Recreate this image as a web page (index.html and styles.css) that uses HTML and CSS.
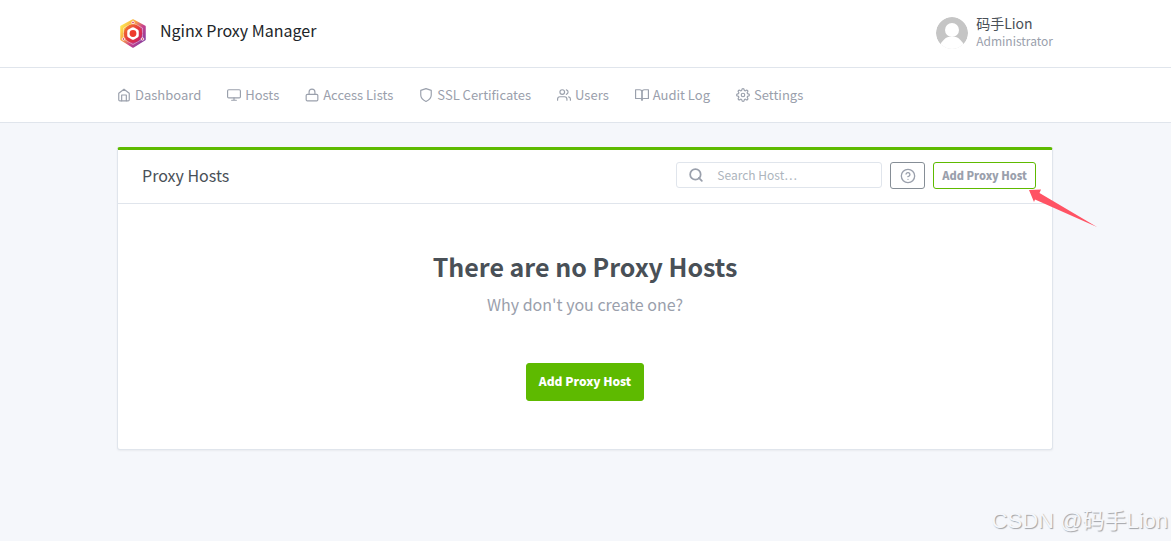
FILE: index.html
```html
<!DOCTYPE html>
<html lang="en">
<head>
  <meta charset="UTF-8" />
  <meta name="viewport" content="width=device-width, initial-scale=1.0"/>
  <title>Nginx Proxy Manager</title>
  <link rel="stylesheet" href="styles.css">
</head>
<body>
  <header class="header">
    <div class="container header-row">
      <a class="brand" href="/">
        <svg class="logo" viewBox="0 0 32 32" aria-hidden="true">
          <defs>
            <linearGradient id="logoFill" x1="0" y1="0.2" x2="0.9" y2="0.9">
              <stop offset="0" stop-color="#fdea4e"/>
              <stop offset="0.35" stop-color="#f8a046"/>
              <stop offset="0.65" stop-color="#c8408c"/>
              <stop offset="1" stop-color="#8440a0"/>
            </linearGradient>
            <linearGradient id="ringFill" x1="0" y1="0" x2="1" y2="1">
              <stop offset="0" stop-color="#f5842c"/>
              <stop offset="0.5" stop-color="#e53a3c"/>
              <stop offset="1" stop-color="#c3186f"/>
            </linearGradient>
          </defs>
          <path d="M16 3 28 9.500v13L16 30 4 22.500v-13z" fill="url(#logoFill)" stroke="url(#logoFill)" stroke-width="1.500" stroke-linejoin="round"/>
          <path d="M16 6 25.500 11v11L16 27.500 6.500 22V11z" fill="none" stroke="#fff" stroke-width="0.800" opacity="0.500"/>
          <circle cx="16" cy="16.500" r="9.200" fill="url(#ringFill)"/>
          <path d="M16 12.500 19.500 14.500v4L16 20.500 12.500 18.500v-4z" fill="#fff" stroke="#fff" stroke-width="4.500" stroke-linejoin="round"/>
          <circle cx="16" cy="16.500" r="3.400" fill="#ee3b2c"/>
          <g fill="#d9486b" stroke="#fff" stroke-width="0.800">
            <circle cx="16" cy="5.500" r="1.300"/>
            <circle cx="6.500" cy="22" r="1.300"/>
            <circle cx="25.500" cy="22" r="1.300"/>
          </g>
        </svg>
        <span>Nginx Proxy Manager</span>
      </a>
      <a class="user" href="#profile">
        <svg class="avatar" viewBox="0 0 32 32" aria-hidden="true">
          <circle cx="16" cy="16" r="16" fill="#c5c5c5"/>
          <circle cx="16" cy="13" r="7" fill="#fff"/>
          <path d="M4 32v-4c2-4 5-7 8-8h8c3 1 6 4 8 8v4z" fill="#fff"/>
        </svg>
        <span class="user-text">
          <span class="user-name">码手Lion</span>
          <small class="user-role">Administrator</small>
        </span>
      </a>
    </div>
  </header>

  <nav class="menu">
    <div class="container menu-row">
      <a class="menu-link" href="#dashboard">
        <svg class="icon" viewBox="0 0 24 24"><path d="M3 9l9-7 9 7v11a2 2 0 0 1-2 2H5a2 2 0 0 1-2-2z"/><path d="M8 22V12h8v10"/></svg>
        Dashboard
      </a>
      <a class="menu-link" href="#hosts">
        <svg class="icon" viewBox="0 0 24 24"><rect x="1" y="3" width="22" height="14" rx="2"/><path d="M8 21h8M12 17v4"/></svg>
        Hosts
      </a>
      <a class="menu-link" href="#access">
        <svg class="icon" viewBox="0 0 24 24"><rect x="2" y="11" width="20" height="11" rx="2"/><path d="M7 11V7a5 5 0 0 1 10 0v4"/></svg>
        Access Lists
      </a>
      <a class="menu-link" href="#certificates">
        <svg class="icon" viewBox="0 0 24 24"><path d="M12 23s9-4 9-11V4l-9-3-9 3v8c0 7 9 11 9 11z"/></svg>
        SSL Certificates
      </a>
      <a class="menu-link" href="#users">
        <svg class="icon" viewBox="0 0 24 24"><path d="M17 21v-2a4 4 0 0 0-4-4H5a4 4 0 0 0-4 4v2"/><circle cx="9" cy="7" r="4"/><path d="M23 21v-2a4 4 0 0 0-3-3.870M16 3.130a4 4 0 0 1 0 7.750"/></svg>
        Users
      </a>
      <a class="menu-link" href="#audit">
        <svg class="icon" viewBox="0 0 24 24"><path d="M1 3h7a4 4 0 0 1 4 4v14a3 3 0 0 0-3-3H1z"/><path d="M23 3h-7a4 4 0 0 0-4 4v14a3 3 0 0 1 3-3h8z"/></svg>
        Audit Log
      </a>
      <a class="menu-link" href="#settings">
        <svg class="icon" viewBox="0 0 24 24"><circle cx="12" cy="12" r="3"/><path d="M19.400 15a1.650 1.650 0 0 0 .33 1.820l.06.06a2 2 0 1 1-2.830 2.830l-.06-.06a1.650 1.650 0 0 0-2.800 1.170V21a2 2 0 0 1-4 0v-.09a1.650 1.650 0 0 0-2.900-1.260l-.06.06a2 2 0 1 1-2.830-2.830l.06-.06A1.650 1.650 0 0 0 3.090 14H3a2 2 0 0 1 0-4h.09a1.650 1.650 0 0 0 1.260-2.820l-.06-.06a2 2 0 1 1 2.830-2.830l.06.06A1.650 1.650 0 0 0 10 3.090V3a2 2 0 0 1 4 0v.09a1.650 1.650 0 0 0 2.820 1.260l.06-.06a2 2 0 1 1 2.830 2.830l-.06.06A1.650 1.650 0 0 0 20.910 10H21a2 2 0 0 1 0 4h-.09a1.650 1.650 0 0 0-1.510 1z"/></svg>
        Settings
      </a>
    </div>
  </nav>

  <main class="container content">
    <section class="card">
      <div class="card-header">
        <h3 class="card-title">Proxy Hosts</h3>
        <div class="card-options">
          <label class="search">
            <svg class="search-icon" viewBox="0 0 24 24" aria-hidden="true"><circle cx="11" cy="11" r="9"/><path d="M22 22l-5-5"/></svg>
            <input class="search-input" type="text" placeholder="Search Host…" aria-label="Search Host">
          </label>
          <button class="btn btn-help" type="button" aria-label="Help">
            <svg class="help-icon" viewBox="0 0 24 24" aria-hidden="true"><circle cx="12" cy="12" r="10"/><path d="M9.090 9a3 3 0 0 1 5.830 1c0 2-3 3-3 3M12 17h.01"/></svg>
          </button>
          <div class="add-wrap">
            <button class="btn btn-outline" type="button">Add Proxy Host</button>
            <svg class="arrow" viewBox="0 0 70 40" aria-hidden="true"><path d="M1 1 13 .500 11.500 4 69 38 7 10.500 6 13z" fill="#ff5364"/></svg>
          </div>
        </div>
      </div>
      <div class="card-body">
        <h1 class="empty-title">There are no Proxy Hosts</h1>
        <p class="empty-text">Why don't you create one?</p>
        <button class="btn btn-primary" type="button">Add Proxy Host</button>
      </div>
    </section>
  </main>

  <div class="watermark">CSDN @码手Lion</div>
</body>
</html>
```
FILE: styles.css
```css
* {
  box-sizing: border-box;
}
body {
  margin: 0;
  min-height: 100vh;
  position: relative;
  font-family: "Noto Sans CJK SC", "Noto Sans", sans-serif;
  font-size: 13px;
  line-height: 20px;
  color: #495057;
  background: #f5f7fb;
}
a {
  color: inherit;
  text-decoration: none;
}
.container {
  max-width: 961px;
  margin: 0 auto;
  padding: 0 13px 0 12px;
}
.header, .menu {
  background: #fff;
  border-bottom: 1px solid #e0e5ec;
}
.header-row {
  display: flex;
  justify-content: space-between;
  align-items: center;
  padding-top: 13px;
  padding-bottom: 14px;
}
.brand {
  display: flex;
  align-items: center;
  gap: 11px;
  height: 40px;
  font-size: 16px;
  color: #212529;
}
.brand span {
  padding-bottom: 6px;
}
.logo {
  width: 32px;
  height: 32px;
}
.user {
  display: flex;
  align-items: center;
  gap: 8px;
}
.avatar {
  width: 32px;
  height: 32px;
  border-radius: 50%;
}
.user-text {
  display: flex;
  flex-direction: column;
  padding-bottom: 2px;
}
.user-name {
  font-size: 14px;
  line-height: 18px;
}
.user-role {
  font-size: 12px;
  line-height: 18px;
  color: #9aa0ac;
}

/* main menu */
.menu-row {
  display: flex;
  gap: 26px;
}
.menu-link {
  display: flex;
  align-items: center;
  gap: 4px;
  height: 54px;
  color: #9aa0ac;
}
.icon, .search-icon, .help-icon {
  width: 14px;
  height: 14px;
  fill: none;
  stroke: currentColor;
  stroke-width: 2;
  stroke-linecap: round;
  stroke-linejoin: round;
}

.content {
  padding-top: 24px;
}
.card {
  background: #fff;
  border: 1px solid #e0e5ec;
  border-top: 3px solid #5eba00;
  border-radius: 3px;
  box-shadow: 0 1px 2px rgba(0,0,0,0.05);
}
.card-header {
  display: flex;
  align-items: center;
  justify-content: space-between;
  padding: 12px 16px 14px 24px;
  border-bottom: 1px solid #e0e5ec;
}
.card-title {
  margin: 0;
  padding-bottom: 2px;
  font-size: 16px;
  font-weight: 400;
}
.card-options {
  display: flex;
  gap: 8px;
}
.search {
  position: relative;
  width: 206px;
  color: #9aa0ac;
}
.search-icon {
  position: absolute;
  left: 13px;
  top: 6px;
  stroke-width: 3;
}
.search-input {
  width: 100%;
  height: 26px;
  padding: 0 8px 2px 40px;
  font: inherit;
  font-size: 12px;
  border: 1px solid #e0e5ec;
  border-radius: 3px;
  background: #fff;
}
.search-input::placeholder {
  color: #adb5bd;
}
.btn {
  font: inherit;
  font-size: 11px;
  font-weight: 900;
  border: 1px solid;
  border-radius: 3px;
  cursor: pointer;
}
.btn-help {
  display: flex;
  align-items: center;
  justify-content: center;
  width: 35px;
  height: 27px;
  padding: 0;
  color: #9aa0ac;
  border-color: #868e96;
  background: #fff;
}
.help-icon {
  width: 16px;
  height: 16px;
}
.add-wrap {
  position: relative;
}
.btn-outline {
  height: 27px;
  padding: 0 8px 2px;
  line-height: 16px;
  color: #9aa0ac;
  border-color: #5eba00;
  background: #fff;
}
.arrow {
  position: absolute;
  left: 95px;
  top: 27px;
  width: 70px;
  height: 40px;
}

/* empty state */
.card-body {
  display: flex;
  flex-direction: column;
  align-items: center;
  padding: 46px 24px 48px;
}
.empty-title {
  margin: 0;
  font-size: 25px;
  line-height: 32px;
}
.empty-text {
  margin: 9px 0 45px;
  font-size: 16px;
  line-height: 27px;
  color: #9aa0ac;
}
.btn-primary {
  height: 38px;
  padding: 0 12px 2px;
  font-size: 12px;
  color: #fff;
  border-color: #5eba00;
  background: #5eba00;
}
.watermark {
  position: absolute;
  right: 3px;
  bottom: 4px;
  font-family: "Liberation Sans", "Noto Sans CJK SC", sans-serif;
  font-size: 22px;
  line-height: 32px;
  color: #f5f7fb;
  text-shadow: 1px 1px 1px #a0a2a6;
}
```
